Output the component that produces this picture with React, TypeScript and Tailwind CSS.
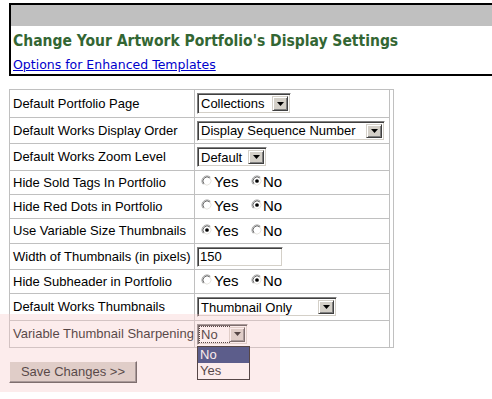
import React from "react";

const arial = { fontFamily: '"Liberation Sans", Arial, sans-serif' };

// classic windows dropdown
function Select({
  text,
  w,
  h = 20,
  focused = false,
}: {
  text: string;
  w: number;
  h?: number;
  focused?: boolean;
}) {
  return (
    <div
      className="flex bg-white border border-t-[#808080] border-l-[#808080] border-b-white border-r-white shadow-[inset_1px_1px_0_#404040,inset_-1px_-1px_0_#d4d0c8] p-[2px]"
      style={{ width: w, height: h }}
    >
      <div className="flex-1 flex items-center min-w-0">
        <span
          className={
            "text-[13px] leading-none text-black whitespace-nowrap px-[1px] py-[1px] " +
            (focused ? "outline outline-1 outline-dotted outline-black w-full h-full flex items-center" : "")
          }
        >
          {text}
        </span>
      </div>
      <div className="w-[16px] h-full bg-[#d4d0c8] border border-t-[#d4d0c8] border-l-[#d4d0c8] border-b-[#404040] border-r-[#404040] shadow-[inset_1px_1px_0_#ffffff,inset_-1px_-1px_0_#808080] flex items-center justify-center">
        <svg width="7" height="4" viewBox="0 0 7 4">
          <polygon points="0,0 7,0 3.5,4" fill="#000" />
        </svg>
      </div>
    </div>
  );
}

function Radio({ checked }: { checked: boolean }) {
  return (
    <svg width="12" height="12" viewBox="0 0 13 13" className="shrink-0 -mt-[3px]">
      <circle cx="6.5" cy="6.5" r="5" fill="#fff" />
      <path d="M2.61 10.39 A5.5 5.5 0 0 1 10.39 2.61" stroke="#a0a0a0" fill="none" />
      <path d="M10.39 2.61 A5.5 5.5 0 0 1 2.61 10.39" stroke="#ffffff" fill="none" />
      <path d="M3.32 9.68 A4.5 4.5 0 0 1 9.68 3.32" stroke="#5a5a5a" fill="none" />
      <path d="M9.68 3.32 A4.5 4.5 0 0 1 3.32 9.68" stroke="#e4e2dc" fill="none" />
      {checked && <circle cx="6.5" cy="6.5" r="2" fill="#000" />}
    </svg>
  );
}

function YesNo({ yes }: { yes: boolean }) {
  return (
    <div className="flex items-center pl-[4px] text-[15px] text-black">
      <Radio checked={yes} />
      <span className="w-[38px] pl-[1px]">Yes</span>
      <Radio checked={!yes} />
      <span>No</span>
    </div>
  );
}

const rows: { label: string; h: number; field: React.ReactNode }[] = [
  { label: "Default Portfolio Page", h: 28, field: <Select text="Collections" w={94} h={21} /> },
  { label: "Default Works Display Order", h: 26, field: <Select text="Display Sequence Number" w={188} /> },
  { label: "Default Works Zoom Level", h: 27, field: <Select text="Default" w={70} /> },
  { label: "Hide Sold Tags In Portfolio", h: 24, field: <YesNo yes={false} /> },
  { label: "Hide Red Dots in Portfolio", h: 24, field: <YesNo yes={false} /> },
  { label: "Use Variable Size Thumbnails", h: 25, field: <YesNo yes={true} /> },
  {
    label: "Width of Thumbnails (in pixels)",
    h: 26,
    field: (
      <div className="w-[86px] h-[20px] bg-white border border-t-[#808080] border-l-[#808080] border-b-white border-r-white shadow-[inset_1px_1px_0_#404040,inset_-1px_-1px_0_#d4d0c8] flex items-center pl-[2px] text-[13px]">
        150
      </div>
    ),
  },
  { label: "Hide Subheader in Portfolio", h: 24, field: <YesNo yes={false} /> },
  { label: "Default Works Thumbnails", h: 27, field: <Select text="Thumbnail Only" w={140} /> },
  { label: "Variable Thumbnail Sharpening", h: 26, field: <Select text="No" w={51} h={21} focused /> },
];

export default function App() {
  return (
    <div className="relative w-[492px] h-[399px] overflow-hidden bg-white text-black" style={arial}>
      {/* Header box, open on the right */}
      <div className="ml-[9px] mt-[3px] w-[483px]">
        <div className="h-[2px] bg-black" />
        <div className="flex">
          <div className="w-[2px] bg-black" />
          <div className="flex-1">
            <div className="h-[21px] bg-[#c0c0c0]" />
            <div
              className="h-[28px] flex items-center pt-[4px] pl-[2px] text-[15.5px] font-bold text-[#336633] whitespace-nowrap"
              style={{ fontFamily: '"DejaVu Sans Condensed", "DejaVu Sans", Verdana, sans-serif' }}
            >
              Change Your Artwork Portfolio's Display Settings
            </div>
            <div className="h-[20px] flex items-start pt-[3px] pl-[2px]">
              <a
                href="#"
                className="text-[12.5px] leading-[16px] text-[#0000cc] underline"
                style={{ fontFamily: '"DejaVu Sans", Verdana, sans-serif' }}
              >
                Options for Enhanced Templates
              </a>
            </div>
          </div>
        </div>
        <div className="h-[2px] bg-black" />
      </div>

      {/* Settings table */}
      <div className="ml-[9px] mt-[13px] w-[385px] flex border border-[#c0c0c0]">
        <div className="w-[380px] flex flex-col border-r border-[#c0c0c0]">
          {rows.map((r, i) => (
            <div
              key={r.label}
              className={"flex " + (i < rows.length - 1 ? "border-b border-[#c0c0c0]" : "")}
              style={{ height: r.h }}
            >
              <div className="w-[185px] shrink-0 border-r border-[#c0c0c0] flex items-center pl-[3px] text-[13px] whitespace-nowrap">
                {r.label}
              </div>
              <div className="flex-1 flex items-center pl-[2px]">{r.field}</div>
            </div>
          ))}
        </div>
      </div>

      <button className="ml-[9px] mt-[13px] w-[128px] h-[22px] bg-[#d4d0c8] border border-t-white border-l-white border-b-[#404040] border-r-[#404040] shadow-[inset_-1px_-1px_0_#808080] text-[13px] text-black flex items-center justify-center">
        Save Changes &gt;&gt;
      </button>

      {/* open dropdown list */}
      <div className="absolute left-[197px] top-[346px] w-[53px] border border-black bg-white text-[13px] leading-[16px]">
        <div className="bg-[#0a246a] text-white pl-[2px]">No</div>
        <div className="pl-[2px]">Yes</div>
      </div>

      {/* pink highlight overlay */}
      <div className="absolute left-0 top-[314px] w-[280px] h-[78px] bg-[rgba(245,200,200,0.35)] pointer-events-none" />
    </div>
  );
}
